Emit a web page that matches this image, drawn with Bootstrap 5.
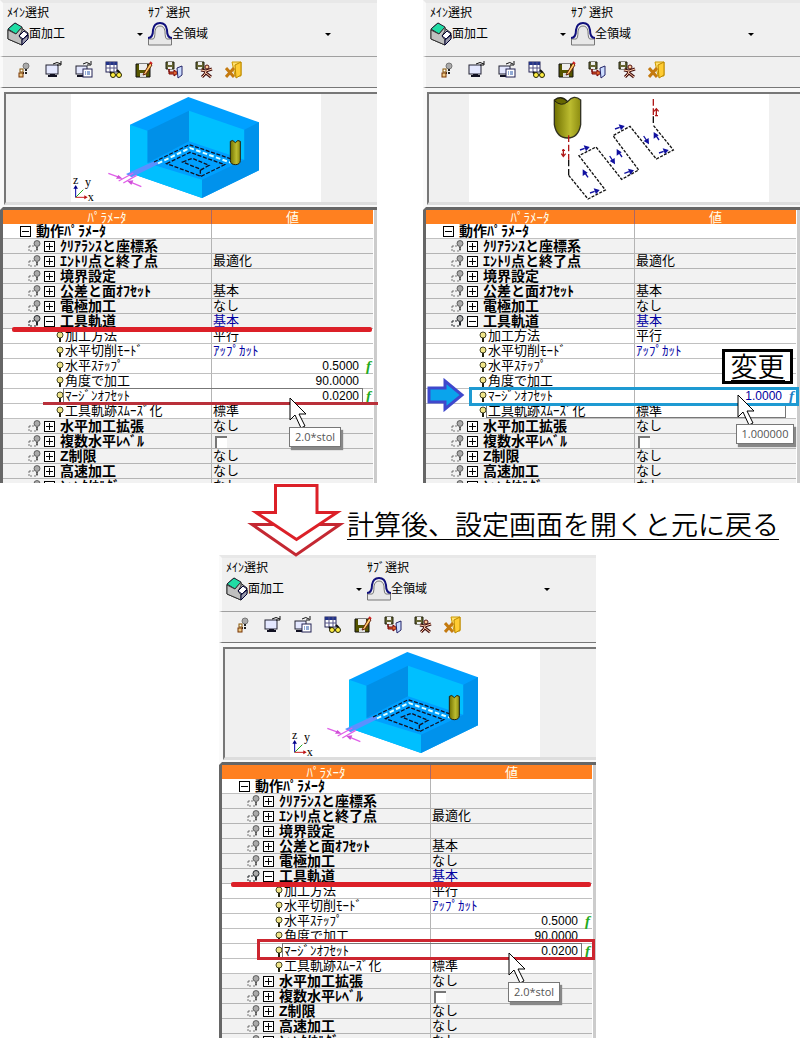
<!DOCTYPE html>
<html lang="ja">
<head>
<meta charset="utf-8">
<meta name="viewport" content="width=device-width, initial-scale=1">
<title>マージンオフセット</title>
<link href="https://cdn.jsdelivr.net/npm/bootstrap@5.3.0/dist/css/bootstrap.min.css" rel="stylesheet">
<style>
body { background:#fff; color:#000; font-family:"Liberation Sans","Noto Sans CJK JP",sans-serif; font-size:13px; line-height:14px; }
.sheet { padding-right:7px; }
.pair { display:grid; grid-template-columns:1fr 1fr; gap:46px; }
.third { width:calc(50% - 23px); margin-left:219px; }
.param-panel { height:483px; overflow:hidden; background:#f0f0f0; }
.panel-box { min-width:0; }
.select-bar, .tool-bar, .preview { border-left:3px solid #fafafa; }
.select-bar { height:57px; border-top:3px solid #e8e8e8; border-bottom:1px solid #a0a0a0; font-size:12px; padding-left:4px; }
.pick { width:141px; padding-top:3px; }
.pick.wide { width:188px; }
.pick label { line-height:14px; }
.pick-line { height:28px; }
.pick select { appearance:none; border:0; background:transparent; color:#000; font-size:12px; line-height:16px; padding:0; min-width:0; outline:0; }
.tri { border:3px solid transparent; border-top:3px solid #000; border-bottom:0; margin-right:5px; }
.tool-bar { height:31px; padding:3px 0 0 6px; border-bottom:1px solid #777; }
.tool-bar button { width:30px; height:20px; border:0; background:transparent; padding:0; line-height:0; }
.tool-bar svg { width:18px; height:18px; }
.preview { height:122px; border-bottom:3px solid #666; padding-top:4px; background:#f8f8f8; }
.preview-in { height:113px; border-top:2px solid #777; border-left:2px solid #777; border-bottom:3px solid #ddd; margin-left:1px; padding-left:8px; background:#f0f0f0; }
.preview-in svg { display:block; height:108px; background:#fff; }
.tree-wrap { background:#fff; border-left:3px solid #666; border-right:3px solid #ccc; }
.tree { width:calc(100% - 1px); table-layout:fixed; border-collapse:separate; border-spacing:0; }
.tree col.c1 { width:209px; }
.tree th { height:14px; line-height:13px; padding:0; background:#ff8020; color:#ffe; font-weight:400; text-align:center; overflow:hidden; }
.tree th:first-child { border-right:1px solid #a66; }
.tree td { height:15px; padding:0; border-bottom:1px solid #c0c0c0; white-space:nowrap; }
.tree td:first-child { border-right:1px solid #b4b4b4; }
.tree tr.grp td { background:#f2f2f2; border-bottom-color:#b4b4b4; }
.cell { height:14px; line-height:14px; display:flex; align-items:center; }
.cell.nm { gap:4px; }
.root .nm { padding-left:18px; font-weight:700; font-size:14px; gap:5px; }
.grp .nm { padding-left:25px; font-weight:700; font-size:14px; }
.grp .nm .pm + span { margin-left:1px; }
.leaf .nm { padding-left:53px; gap:1px; }
.cell.vl { padding-left:1px; }
.num { justify-content:flex-end; padding-right:14px; position:relative; }
.num .digits { font-size:12px; }
.num b { position:absolute; right:2px; color:#2a2; font:italic 700 15px/14px "Liberation Serif",serif; }
.blue { color:#0000a0; }
.num.blue b { color:#2080c8; }
.pm { width:11px; height:11px; border:1px solid #000; background:linear-gradient(#000,#000) center/7px 1px no-repeat #fff; flex:none; margin-left:-1px; }
.pm.plus { background:linear-gradient(#000,#000) center/7px 1px no-repeat, linear-gradient(#000,#000) center/1px 7px no-repeat #fff; }
.cell input { appearance:none; width:12px; height:12px; margin:2px 0 0 2px; background:#fff; border:solid #eee; border-width:2px 0 0 2px; border-color:#777 #eee #eee #777; }
.over { position:absolute; pointer-events:none; }
.mark-wide { left:12px; right:5px; top:327px; height:5px; background:#dc2028; border-radius:2px; }
.mark-thin { left:43px; right:-1px; top:402px; height:3px; background:#b9303a; }
.focus-box { left:63px; right:14px; top:388px; height:16px; border:1px solid #777; }
.focus-low { top:403px; height:15px; }
.red-box { left:38px; right:1px; top:384px; height:21px; border:3px solid #cc2630; }
.cyan-box { left:46px; right:1px; top:387px; height:19px; border:3px solid #1e9ad2; }
.point { left:289px; top:397px; width:20px; height:32px; }
.hint { left:289px; top:427px; width:52px; height:20px; border:1px solid #777; background:#fff; color:#555; font:11px/18px "Open Sans",sans-serif; text-align:center; box-shadow:2px 3px 1px #888; }
.p2 .point { left:314px; top:394px; }
.p2 .hint { left:313px; top:424px; width:58px; }
.blue-arrow { left:4px; top:378px; width:38px; height:34px; }
.light { font-family:"Noto Sans CJK JP DemiLight","Noto Sans CJK JP",sans-serif; font-weight:350; font-size:27px; }
.change { right:7px; top:349px; width:71px; height:35px; border:3px solid #000; background:#fff; line-height:28px; text-align:center; }
.change span { border-bottom:1px solid #000; display:inline-block; height:27px; line-height:24px; }
.between { height:72px; padding-left:250px; }
.between svg { width:92px; height:74px; flex:none; overflow:visible; z-index:2; }
.note { margin:26px 0 0 5px; height:31px; line-height:30px; border-bottom:1px solid #000; white-space:nowrap; }
</style>
</head>
<body>
<svg width="0" height="0" class="position-absolute" aria-hidden="true">
  <defs>
    <symbol id="i-cube" viewBox="0 0 22 24"><path d="M1 7 8 1 21 11V16L15 23 1 17Z" fill="#b0b0b0" stroke="#222"/><path d="M1 7 8 1 15 5 9 12Z" fill="#20dca4" stroke="#223"/><path d="M9 12 15 5V9L12 14 15 18V23L1 17V8Z" fill="#c0c0c0" stroke="#333"/><path d="M12 14 17 9 21 12 16 17Z" fill="#fff" stroke="#003"/><path d="M15 18 21 13V17L15 23Z" fill="#99a" stroke="#003"/></symbol>
    <symbol id="i-arch" viewBox="0 0 24 24"><path d="M.5 23V17H5Q7 17 7 9 8 4 12 4 16 4 17 9 17 17 19 17H23.500V23Z" fill="#e8e8e8" stroke="#777"/><path d="M0 16Q5 16 5 8 6 1 12 1 18 1 19 8 19 16 24 16" fill="none" stroke="#10107c" stroke-width="2"/></symbol>
    <symbol id="t1" viewBox="0 0 18 18"><circle cx="11" cy="5" r="3" fill="#aaa" stroke="#777"/><path d="M11 8V12H8" fill="none" stroke="#222" stroke-width="2" stroke-dasharray="2 1"/><rect x="5" y="8" width="3" height="3" fill="#fff" stroke="#850"/><rect x="4" y="12" width="4" height="4" fill="#ec8" stroke="#730"/></symbol>
    <symbol id="t2" viewBox="0 0 18 18"><rect x="1" y="4" width="12" height="9" fill="#e4e8ff" stroke="#223"/><path d="M3 15H12M5 14H10" stroke="#112" stroke-width="2"/><path d="M8 3Q12 0 16 3M16 0V4H12" fill="none" stroke="#111"/></symbol>
    <symbol id="t3" viewBox="0 0 18 18"><rect x="1" y="5" width="11" height="8" fill="#e4e8ff" stroke="#223"/><path d="M2 15H9" stroke="#112" stroke-width="2"/><path d="M8 3Q12 0 15 3M16 0V4H12" fill="none" stroke="#111"/><rect x="8" y="8" width="9" height="8" fill="#fff" stroke="#225"/><path d="M10 11H11M12 11H15M10 13H11M12 13H15" stroke="#25a"/></symbol>
    <symbol id="t4" viewBox="0 0 18 18"><rect x="1" y="1" width="11" height="10" fill="#fff" stroke="#225"/><path d="M1 2.500H12" stroke="#238" stroke-width="3"/><path d="M1 7H12M5 1V11M9 1V11" stroke="#558"/><path d="M5 11 8 14M12 9 15 12" stroke="#111" stroke-width="2"/><circle cx="8" cy="14" r="2.500" fill="#fe4" stroke="#220"/><circle cx="14" cy="14" r="2.500" fill="#fe4" stroke="#220"/></symbol>
    <symbol id="t5" viewBox="0 0 18 18"><path d="M1 3H15V16H1Z" fill="#550" stroke="#111"/><path d="M4 3H12V9H4Z" fill="#eee"/><path d="M5 12H11V16H5Z" fill="#ddd"/><path d="M9 12 15 2 17 4 11 13 8 14Z" fill="#fc6" stroke="#621"/><path d="M15 1 17 3" stroke="#c22" stroke-width="2"/></symbol>
    <symbol id="t6" viewBox="0 0 18 18"><path d="M1 1H9V8H1Z" fill="#663" stroke="#221"/><path d="M3 1H7V4H3ZM3 6H7V8H3Z" fill="#eee"/><path d="M4 8V11H9V9L13 12 9 15V13H4Z" fill="#d63" stroke="#700"/><path d="M12 7 17 5V14L13 17Z" fill="#cdf" stroke="#226"/></symbol>
    <symbol id="t7" viewBox="0 0 18 18"><path d="M1 1H9V8H1Z" fill="#663" stroke="#221"/><path d="M3 1H7V4H3ZM3 6H7V8H3Z" fill="#eee"/><circle cx="12" cy="6" r="2" fill="#fc9" stroke="#511"/><path d="M6 9 11 10 17 8M11 10 10 13 7 16M11 12 16 16" fill="none" stroke="#411" stroke-width="3"/><path d="M6 9 11 10 17 8M11 10 10 13 7 16M11 12 16 16" fill="none" stroke="#fca"/></symbol>
    <symbol id="t8" viewBox="0 0 18 18"><path d="M7 1H16V15H10Z" fill="#ffe070" stroke="#c90"/><path d="M10 4 16 1V14L11 17Z" fill="#fc3" stroke="#b80"/><path d="M1 7 9 16M9 7 1 16" stroke="#c47a10" stroke-width="3"/></symbol>
    <symbol id="lamp" viewBox="0 0 13 13"><path d="M1 6H6M1 6V11H4M6 11H9V7" fill="none" stroke="currentColor" stroke-dasharray="2 1"/><circle cx="9" cy="3.500" r="3" fill="#aaa" stroke="currentColor"/><path d="M9 7V10" stroke="currentColor" stroke-width="2"/></symbol>
    <symbol id="bulb" viewBox="0 0 8 12"><circle cx="4" cy="5" r="3" fill="#f0e488" stroke="#442"/><path d="M4 8V12" stroke="#221" stroke-width="2"/></symbol>
    <symbol id="cursor" viewBox="0 0 20 32"><path d="M1 1V23L6 18 12 31 16 29 10 17H17Z" fill="#fff" stroke="#000"/></symbol>
    <linearGradient id="brass"><stop offset="0" stop-color="#707000"/><stop offset=".6" stop-color="#bcbc30"/><stop offset="1" stop-color="#8c8c10"/></linearGradient>
    <symbol id="pocket" viewBox="213 18 750 324">
      <path d="M390 110 565 27 777 103 777 247 606 330 390 255Z" fill="#00a0ff"/>
      <path d="M442 128 567 68V160L442 225Z" fill="#0090e8"/><path d="M567 68 733 125V215L567 160Z" fill="#00bfff"/>
      <path d="M733 125 777 103V247L606 330V275L733 215Z" fill="#0092ec"/><path d="M390 110 442 128V225L606 275V330L390 255Z" fill="#00bfff"/>
      <path d="M462 220 480 226 395 268 378 258Z" fill="#5a90ff"/>
      <g fill="none"><path d="M462 222 568 170 700 215M500 227 570 193 674 230 603 265ZM548 222 577 211 627 232 604 245Z M601 245V265" stroke="#112" stroke-width="4" stroke-dasharray="12 5"/><path d="M474 226 570 180 692 224" stroke="#dff" stroke-width="6" stroke-dasharray="14 7"/>
      <path d="M325 256 360 269M424 296 388 281M356 279 400 255M370 285 410 262" stroke="#e060e8" stroke-width="4"/></g>
      <path d="M368 272 348 272 355 261ZM382 279 400 277 394 291Z" fill="#d050d8"/>
      <path d="M691 160Q698 153 706 164 714 153 721 160V218Q720 230 706 230 692 230 691 218Z" fill="url(#brass)" stroke="#221" stroke-width="3"/>
      <path d="M227 328V296" stroke="#00a" stroke-width="3"/><path d="M220 302 227 291 234 302Z" fill="#008"/><path d="M227 328 250 305" stroke="#2a2" stroke-width="3"/><path d="M227 328H256" stroke="#c22" stroke-width="3"/><path d="M253 322 263 328 253 334Z" fill="#b11"/>
      <g font-family="Liberation Serif" font-size="36"><text x="219" y="289">z</text><text x="255" y="294">y</text><text x="263" y="338">x</text></g>
    </symbol>
    <symbol id="zigzag" viewBox="147 18 900 324">
      <path d="M403 36Q425 20 443 41 462 18 482 36V110Q475 150 443 150 410 150 403 110Z" fill="url(#brass)" stroke="#332" stroke-width="4"/><path d="M403 38Q420 20 443 41 425 58 403 38Z" fill="#666600" stroke="#221" stroke-width="3"/>
      <g fill="none" stroke-width="4"><path d="M446 262 504 333 556 306 477 203 528 177 605 274 656 246 579 143 630 115 709 213 760 186 700 112" stroke="#111" stroke-dasharray="9 4"/><path d="M446 215V262M700 85V112" stroke="#111" stroke-dasharray="20 8"/><path d="M446 142V215M700 33V85" stroke="#b01818" stroke-dasharray="20 8"/><path d="M430 183V205M424 197 430 205 437 197M426 187H435M709 62V85M702 70 709 62 716 70M705 83H714" stroke="#b01818"/></g>
      <g fill="#1010a0" stroke="#1010a0" stroke-width="4"><g id="ar0"><path d="M480 186 494 181"/><path d="M491 172 509 177 498 190Z" stroke="none"/></g>
      <use href="#ar0" x="105" y="-63"/><use href="#ar0" x="30" y="129"/><use href="#ar0" x="133" y="70"/><use href="#ar0" x="237" y="9"/>
      <g id="ar1"><path d="M504 268 495 255"/><path d="M488 244 488 264 503 254Z" stroke="none"/></g><use href="#ar1" x="102" y="-61"/><use href="#ar1" x="213" y="-112"/>
      <g id="ar2"><path d="M569 204 577 216"/><path d="M585 229 584 210 569 219Z" stroke="none"/></g><use href="#ar2" x="102" y="-60"/></g>
    </symbol>
  </defs>
</svg>

<main class="sheet">
  <div class="pair">
    <section class="panel-box position-relative p1" data-panel="a" data-art="pocket" data-art-width="250" data-step="0.5000" data-angle="90.0000" data-margin="0.0200">
      <span class="over focus-box"></span><span class="over mark-wide"></span><span class="over mark-thin"></span>
      <svg class="over point"><use href="#cursor"/></svg><div class="over hint">2.0*stol</div>
    </section>
    <section class="panel-box position-relative p2" data-panel="b" data-art="zigzag" data-art-width="300" data-step="" data-angle="" data-margin="1.0000">
      <span class="over focus-box focus-low"></span><span class="over cyan-box"></span>
      <svg class="over blue-arrow" viewBox="0 0 38 34"><path d="M2 10H18V3L35 17 18 31V24H2Z" fill="#0aa4ec" stroke="#3f48cc" stroke-width="3"/></svg>
      <div class="over change light"><span>変更</span></div>
      <svg class="over point"><use href="#cursor"/></svg><div class="over hint">1.000000</div>
    </section>
  </div>
  <div class="between d-flex align-items-start">
    <svg viewBox="250 484 92 74" class="position-relative"><path d="M274 525.500H252L296 556 340 525.500H319" fill="#fff" stroke="#c42832" stroke-width="3"/><path d="M275.500 486.500H317V513.500H337L296.500 540.500 256 513.500H275.500Z" fill="#fff" stroke="#dc2028" stroke-width="3"/></svg>
    <p class="note light">計算後、設定画面を開くと元に戻る</p>
  </div>
  <section class="panel-box third position-relative p3" data-panel="c" data-art="pocket" data-art-width="250" data-step="0.5000" data-angle="90.0000" data-margin="0.0200">
    <span class="over focus-box"></span><span class="over mark-wide"></span><span class="over red-box"></span>
    <svg class="over point"><use href="#cursor"/></svg><div class="over hint">2.0*stol</div>
  </section>
</main>

<script src="https://cdn.jsdelivr.net/npm/bootstrap@5.3.0/dist/js/bootstrap.bundle.min.js"></script>
<script>
const tools = ['表示','画面','画面一覧','検索','保存','読込','実行','閉じる'];
const rowsFor = d => [
  ['root','動作ﾊﾟﾗﾒｰﾀ',''],
  ['grp','ｸﾘｱﾗﾝｽと座標系',''], ['grp','ｴﾝﾄﾘ点と終了点','最適化'], ['grp','境界設定',''],
  ['grp','公差と面ｵﾌｾｯﾄ','基本'], ['grp','電極加工','なし'], ['grp open','工具軌道','基本','blue'],
  ['leaf','加工方法','平行'], ['leaf','水平切削ﾓｰﾄﾞ','ｱｯﾌﾟｶｯﾄ','blue'], ['leaf','水平ｽﾃｯﾌﾟ',d.step,d.step ? 'num f' : 'num'],
  ['leaf','角度で加工',d.angle,'num'], ['leaf','ﾏｰｼﾞﾝｵﾌｾｯﾄ',d.margin,d.margin === '1.0000' ? 'num f blue' : 'num f'],
  ['leaf','工具軌跡ｽﾑｰｽﾞ化','標準'],
  ['grp','水平加工拡張','なし'], ['grp','複数水平ﾚﾍﾞﾙ','check'], ['grp','Z制限','なし'],
  ['grp','高速加工','なし'], ['grp','ｼｬﾝｸ/ﾎﾙﾀﾞ','なし']
];
function rowHtml([kind, name, value, cls = '']) {
  const open = kind === 'root' || kind.includes('open');
  const box = kind === 'leaf' ? '' : `<span class="pm ${open ? '' : 'plus'}"></span>`;
  const lamp = kind.startsWith('grp') ? `<svg width="13" height="13" class="flex-shrink-0 ${open ? 'text-dark' : 'text-black-50'}"><use href="#lamp"/></svg>`
    : kind === 'leaf' ? '<svg width="8" height="12" class="flex-shrink-0"><use href="#bulb"/></svg>' : '';
  const v = value === 'check' ? `<input type="checkbox" aria-label="${name}">` : value;
  const f = / f\b/.test(cls) ? '<b>f</b>' : '';
  return `<tr class="${kind}"><td><div class="cell nm">${lamp}${box}<span>${name}</span></div></td><td><div class="cell vl ${cls}"><span class="d-flex ${cls.includes('num') ? 'digits' : ''}">${v}</span>${f}</div></td></tr>`;
}
document.querySelectorAll('[data-panel]').forEach(p => {
  const { panel, art, artWidth } = p.dataset;
  p.insertAdjacentHTML('afterbegin', `
  <div class="param-panel">
    <div class="select-bar d-flex">
      <div class="pick"><label for="m-${panel}" class="d-block">ﾒｲﾝ選択</label>
        <div class="pick-line d-flex align-items-center"><svg width="22" height="24"><use href="#i-cube"/></svg><select id="m-${panel}" class="flex-grow-1"><option>面加工</option></select><span class="tri"></span></div></div>
      <div class="pick wide"><label for="s-${panel}" class="d-block">ｻﾌﾞ選択</label>
        <div class="pick-line d-flex align-items-center"><svg width="24" height="24"><use href="#i-arch"/></svg><select id="s-${panel}" class="flex-grow-1"><option>全領域</option></select><span class="tri"></span></div></div>
    </div>
    <div class="tool-bar d-flex">${tools.map((t, i) => `<button type="button" aria-label="${t}"><svg><use href="#t${i + 1}"/></svg></button>`).join('')}</div>
    <div class="preview"><div class="preview-in d-flex justify-content-center"><svg width="${artWidth}"><use href="#${art}"/></svg></div></div>
    <div class="tree-wrap"><table class="tree"><colgroup><col class="c1"><col></colgroup>
      <thead><tr><th>ﾊﾟﾗﾒｰﾀ</th><th>値</th></tr></thead><tbody>${rowsFor(p.dataset).map(rowHtml).join('')}</tbody></table></div>
  </div>`);
});
</script>
</body>
</html>
